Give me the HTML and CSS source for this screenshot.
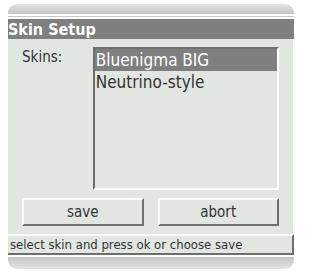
FILE: index.html
```html
<!DOCTYPE html>
<html>
<head>
<meta charset="utf-8">
<link rel="stylesheet" href="styles.css">
</head>
<body>
<div class="dialog">
  <div class="cap"></div>
  <div class="stripes"></div>
  <div class="title">Skin Setup</div>
  <div class="body">
    <div class="row">
      <div class="label">Skins:</div>
      <div class="list">
        <div class="item selected">Bluenigma BIG</div>
        <div class="item">Neutrino-style</div>
      </div>
    </div>
    <div class="buttons">
      <div class="btn">save</div>
      <div class="btn">abort</div>
    </div>
  </div>
  <div class="status">select skin and press ok or choose save</div>
  <div class="shadow"></div>
</div>
</body>
</html>
```
FILE: styles.css
```css
html, body {
  margin: 0;
  padding: 0;
  background: #ffffff;
}
.dialog {
  margin: 4px 0 0 8px;
  width: 286px;
  font-family: "DejaVu Sans Condensed", "DejaVu Sans", sans-serif;
  font-stretch: condensed;
  color: #333333;
}
.cap {
  height: 10px;
  background: linear-gradient(#e4e4e4, #c4c4c4);
  border-radius: 9px 9px 0 0;
}
.stripes {
  height: 5px;
  background: linear-gradient(#ffffff 0, #ffffff 2px, #c8c8c8 2px, #c8c8c8 3px, #ffffff 3px);
}
.title {
  height: 20px;
  background: #7f7f7f;
  color: #ffffff;
  font-size: 16px;
  font-weight: bold;
  line-height: 21px;
}
.body {
  background: #e1e6e1;
  height: 195px;
  padding: 8px 14px 0 14px;
  box-sizing: border-box;
  border-right: 1px solid #ffffff;
}
.row {
  display: flex;
}
.label {
  width: 71px;
  font-size: 15px;
  padding-top: 1px;
}
.list {
  width: 187px;
  height: 143px;
  box-sizing: border-box;
  border-top: 2px solid #6e6e6e;
  border-left: 2px solid #6e6e6e;
  border-right: 2px solid #ffffff;
  border-bottom: 2px solid #ffffff;
  font-size: 17px;
}
.item {
  height: 22px;
  line-height: 22px;
  padding-left: 1px;
}
.item.selected {
  background: #7f7f7f;
  color: #ffffff;
}
.buttons {
  display: flex;
  gap: 14px;
  margin-top: 8px;
}
.btn {
  flex: 1;
  height: 28px;
  box-sizing: border-box;
  border-top: 2px solid #ffffff;
  border-left: 2px solid #ffffff;
  border-right: 2px solid #6e6e6e;
  border-bottom: 2px solid #6e6e6e;
  text-align: center;
  line-height: 24px;
  font-size: 15px;
}
.status {
  height: 21px;
  box-sizing: border-box;
  background: #e1e6e1;
  border-top: 2px solid #ffffff;
  border-right: 2px solid #6e6e6e;
  border-bottom: 2px solid #6e6e6e;
  font-size: 13px;
  line-height: 17px;
  padding-left: 2px;
}
.shadow {
  height: 12px;
  margin-top: 2px;
  background: linear-gradient(#c4c4c4, #e4e4e4);
  border-radius: 0 0 9px 9px;
}
```
